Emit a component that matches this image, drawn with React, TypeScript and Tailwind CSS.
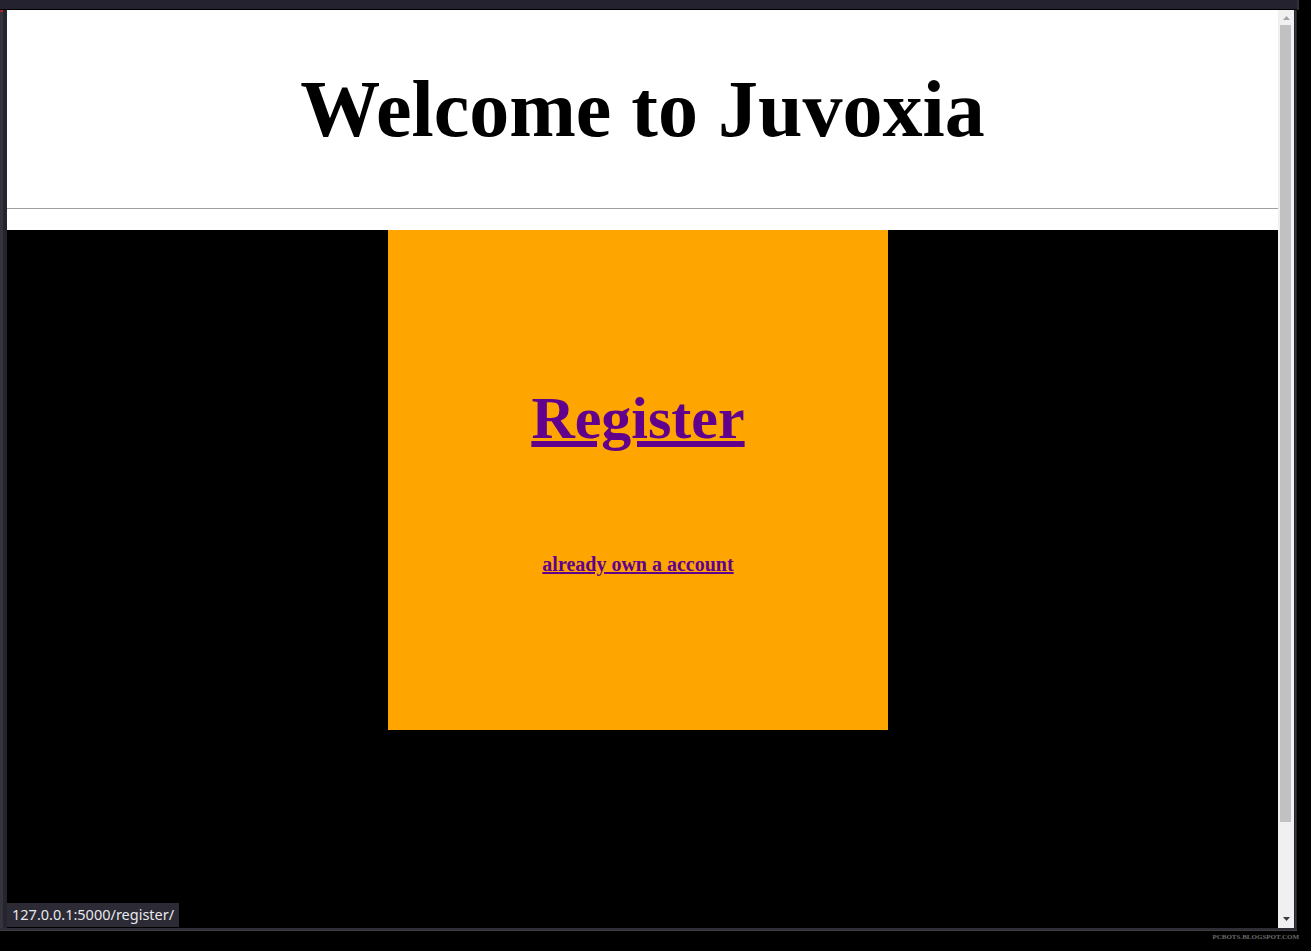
export default function App() {
  return (
    <div className="relative w-[1311px] h-[951px] bg-black overflow-hidden flex flex-col">
      {/* window top bar */}
      <div className="flex h-[10px]">
        <div className="w-[1297px] h-[9px] bg-[#23222e] border-b border-black box-content" />
        <div className="w-[2px] h-[10px] bg-[#2f2f38]" />
      </div>

      <div className="flex h-[918px]">
        {/* left frame */}
        <div className="relative w-[7px] bg-[#26252f] flex">
          <div className="w-[3px] bg-[#34343c]" />
          <div className="absolute left-0 top-0 w-[3px] h-[2px] bg-[#b3202c]" />
        </div>

        {/* page */}
        <div className="w-[1271px] flex flex-col bg-black">
          <div className="h-[220px] bg-white flex flex-col">
            <h1 className="pt-[59px] text-center text-[80px] leading-none font-bold text-black font-['Liberation_Serif',serif]">
              Welcome to Juvoxia
            </h1>
            <hr className="mt-[59px] border-0 border-t border-[#a0a0a0]" />
          </div>

          <div className="flex-1">
            <div className="ml-[381px] w-[500px] h-[500px] bg-[#ffa500] flex flex-col items-center pt-[158px] font-['Liberation_Serif',serif] text-[#62008e]">
              <a href="#" className="block text-[60px] leading-none font-bold underline">
                Register
              </a>
              <a href="#" className="block mt-[106px] text-[20px] leading-none font-bold underline">
                already own a account
              </a>
            </div>
          </div>
        </div>

        {/* scrollbar */}
        <div className="w-[16px] bg-[#f0f0f0] flex flex-col items-center">
          <svg width="9" height="14" viewBox="0 0 9 14" className="mt-[1px]">
            <path d="M1 9 L4.5 5 L8 9 Z" fill="#a3a3a3" />
          </svg>
          <div className="w-[11px] h-[797px] bg-[#c1c1c1] mr-[1px]" />
          <div className="flex-1" />
          <svg width="9" height="14" viewBox="0 0 9 14" className="mb-[2px]">
            <path d="M1 5 L4.5 9 L8 5 Z" fill="#3c3c3c" />
          </svg>
        </div>

        {/* right frame */}
        <div className="w-[3px] bg-[#24232c] flex">
          <div className="w-[1px]" />
          <div className="w-[1px] bg-[#3a3a42]" />
        </div>
      </div>

      {/* bottom frame */}
      <div className="w-[1297px] h-[3px] bg-[#2e2d36] border-b border-[#3d3d44]" />

      <div className="flex justify-end w-[1299px] pt-[3px]">
        <span className="text-[7px] leading-none font-bold text-[#6b6b6b] font-['Liberation_Serif',serif] [text-shadow:0_0_2px_#000]">
          PCBOTS.BLOGSPOT.COM
        </span>
      </div>

      {/* status bubble */}
      <div className="absolute left-[7px] top-[903px] h-[24px] px-[5px] bg-[#2b2a35] flex items-center text-[14.5px] text-[#e8e8ec] font-['Noto_Sans',sans-serif]">
        127.0.0.1:5000/register/
      </div>
    </div>
  );
}
